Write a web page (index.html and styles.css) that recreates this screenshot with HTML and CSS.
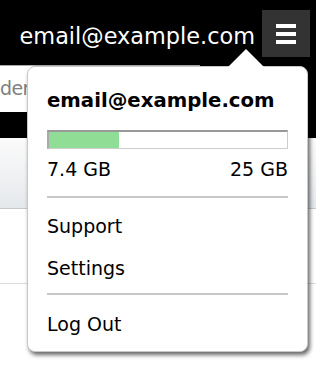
FILE: index.html
```html
<!DOCTYPE html>
<html lang="en">
<head>
    <meta charset="UTF-8">
    <meta name="viewport" content="width=device-width, initial-scale=1.0">
    <title>Account menu</title>
    <link rel="stylesheet" href="styles.css">
</head>
<body>
    <div class="topbar">
        <div class="header">
            <span class="user">email@example.com</span>
            <button class="menu-btn" aria-label="Menu">
                <span></span><span></span><span></span>
            </button>
        </div>
        <div class="searchrow">
            <div class="search">der</div>
        </div>
    </div>
    <div class="toolbar"></div>
    <div class="row"></div>

    <div class="popup">
        <div class="popup-title">email@example.com</div>
        <div class="quota">
            <div class="quota-fill" style="width: 29.6%"></div>
        </div>
        <div class="quota-text">
            <span>7.4 GB</span>
            <span>25 GB</span>
        </div>
        <div class="section">
            <div class="item">Support</div>
            <div class="item">Settings</div>
        </div>
        <div class="section last">
            <div class="item">Log Out</div>
        </div>
    </div>
</body>
</html>
```

FILE: styles.css
```css
body {
    margin: 0;
    font-family: 'DejaVu Sans', sans-serif;
    background: #fff;
    color: #000;
    overflow: hidden;
}
.topbar {
    background: #000;
    height: 138px;
}
.header {
    height: 65px;
    box-sizing: border-box;
    display: flex;
    justify-content: flex-end;
    align-items: flex-start;
    padding: 10px 6px 0 0;
}
.user {
    color: #fff;
    font-size: 22.4px;
    line-height: 52px;
    margin-right: 7px;
}
.menu-btn {
    width: 48px;
    height: 47px;
    background: #333;
    border: none;
    padding: 0;
    display: flex;
    flex-direction: column;
    align-items: center;
    justify-content: center;
    gap: 4px;
}
.menu-btn span {
    display: block;
    width: 20px;
    height: 4px;
    background: #fff;
}
.searchrow {
    height: 47px;
}
.search {
    width: 200px;
    height: 47px;
    box-sizing: border-box;
    background: #fff;
    border-top: 1px solid #aaa;
    color: #808080;
    font-size: 19px;
    letter-spacing: -0.6px;
    line-height: 44px;
}
.toolbar {
    height: 70px;
    background: linear-gradient(#fbfbfb, #e5e8eb);
    border-bottom: 1px solid #c8c8c8;
}
.row {
    height: 74px;
    border-bottom: 1px solid #dcdcdc;
}
.popup {
    position: absolute;
    left: 27px;
    top: 66px;
    width: 281px;
    box-sizing: border-box;
    background: #fff;
    border: 1px solid #c8c8c8;
    border-radius: 8px;
    padding: 22px 19px 6px;
    box-shadow: 2px 3px 4px rgba(0, 0, 0, 0.6);
}
.popup::before {
    content: "";
    position: absolute;
    top: -18px;
    left: 200px;
    border-left: 18px solid transparent;
    border-right: 18px solid transparent;
    border-bottom: 18px solid #fff;
}
.popup-title {
    font-weight: bold;
    font-size: 19.7px;
    line-height: 24px;
}
.quota {
    margin-top: 17px;
    height: 19px;
    box-sizing: border-box;
    border: 1px solid #ccc;
    border-top: 2px solid #999;
    border-left: 2px solid #aaa;
}
.quota-fill {
    height: 100%;
    background: #90dd96;
}
.quota-text {
    display: flex;
    justify-content: space-between;
    font-size: 19px;
    line-height: 24px;
    margin-top: 8px;
    padding-bottom: 15px;
    border-bottom: 2px solid #c8c8c8;
}
.section {
    padding: 7px 0 4px;
    border-bottom: 2px solid #c8c8c8;
}
.section.last {
    border-bottom: none;
    padding: 8px 0 0;
}
.item {
    font-size: 19px;
    line-height: 42px;
}
```
